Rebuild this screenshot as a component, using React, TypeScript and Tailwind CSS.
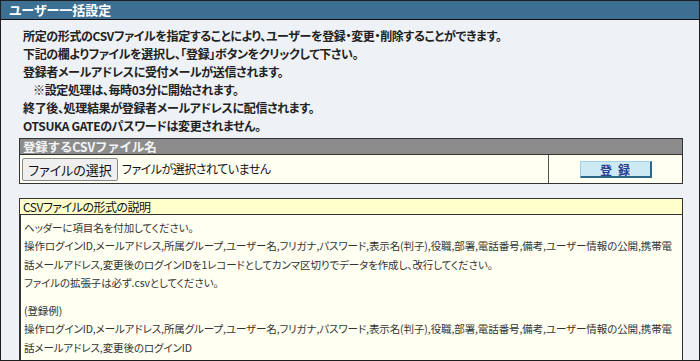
import React from "react";

const jp = { fontFamily: '"Noto Sans CJK JP", "Noto Sans", sans-serif' };

export default function App() {
  return (
    <div
      className="w-[700px] h-[361px] overflow-hidden border border-[#1e1e1e] bg-[#eef1f5] flex flex-col [font-feature-settings:'palt']"
      style={jp}
    >
      <div className="h-[19px] shrink-0 bg-[#3c6f91] border-b border-[#111] pl-[8px] text-white font-bold text-[13px] leading-[18px]">
        ユーザー一括設定
      </div>
      <div className="pl-[17px] pr-[16px] pt-[7px] flex flex-col">
        <div className="pl-[5px] text-[12px] font-bold leading-[18px] text-[#222] whitespace-nowrap tracking-[-0.35px]">
          <div>所定の形式のCSVファイルを指定することにより、ユーザーを登録・変更・削除することができます。</div>
          <div>下記の欄よりファイルを選択し、「登録」ボタンをクリックして下さい。</div>
          <div>登録者メールアドレスに受付メールが送信されます。</div>
          <div className="pl-[10px]">※設定処理は、毎時03分に開始されます。</div>
          <div>終了後、処理結果が登録者メールアドレスに配信されます。</div>
          <div>OTSUKA GATEのパスワードは変更されません。</div>
        </div>

        <div className="mt-[3px] ml-[1px] border border-[#333] flex flex-col">
          <div className="h-[16px] bg-[#8c8c8c] border-b border-[#333] pl-[3px] text-[12.5px] font-bold leading-[16px] text-[#f4f4f4] [font-feature-settings:normal] tracking-[-0.2px]">
            登録するCSVファイル名
          </div>
          <div className="h-[28px] bg-[#fffff2] flex">
            <div className="w-[529px] border-r border-[#555] flex items-center pl-[2px]">
              <button className="h-[23px] w-[96px] bg-[#efefef] border border-[#8a8a8a] rounded-[2px] text-[13px] text-[#111] leading-[21px]">
                ファイルの選択
              </button>
              <span className="ml-[4px] text-[12px] text-[#111] tracking-[-0.5px]">ファイルが選択されていません</span>
            </div>
            <div className="flex-1 flex items-center justify-center pt-[1px]">
              <button className="h-[17px] w-[72px] bg-[#cde9f4] border border-t-[#9fd0e4] border-l-[#9fd0e4] border-r-[#2b6a86] border-b-[#2b6a86] border-r-2 border-b-2 text-[12px] font-bold text-[#2a3f8f] leading-[13px] tracking-[6px] pl-[6px]">
                登録
              </button>
            </div>
          </div>
        </div>

        <div className="mt-[14px] ml-[1px] border border-[#333] flex flex-col">
          <div className="h-[16px] bg-[#ffffcc] border-b border-[#333] pl-[3px] text-[12px] leading-[16px] text-[#111] tracking-[-0.5px]">
            CSVファイルの形式の説明
          </div>
          <div className="bg-[#fffff2] border-l border-[#333] pl-[3px] pt-[4px] text-[10.5px] leading-[18.3px] text-[#333] whitespace-nowrap tracking-[-0.1px] h-[200px]">
            <div>ヘッダーに項目名を付加してください。</div>
            <div>操作ログインID,メールアドレス,所属グループ,ユーザー名,フリガナ,パスワード,表示名(判子),役職,部署,電話番号,備考,ユーザー情報の公開,携帯電</div>
            <div>話メールアドレス,変更後のログインIDを1レコードとしてカンマ区切りでデータを作成し、改行してください。</div>
            <div>ファイルの拡張子は必ず.csvとしてください。</div>
            <div className="h-[10px]"></div>
            <div>(登録例)</div>
            <div>操作ログインID,メールアドレス,所属グループ,ユーザー名,フリガナ,パスワード,表示名(判子),役職,部署,電話番号,備考,ユーザー情報の公開,携帯電</div>
            <div>話メールアドレス,変更後のログインID</div>
          </div>
        </div>
      </div>
    </div>
  );
}
